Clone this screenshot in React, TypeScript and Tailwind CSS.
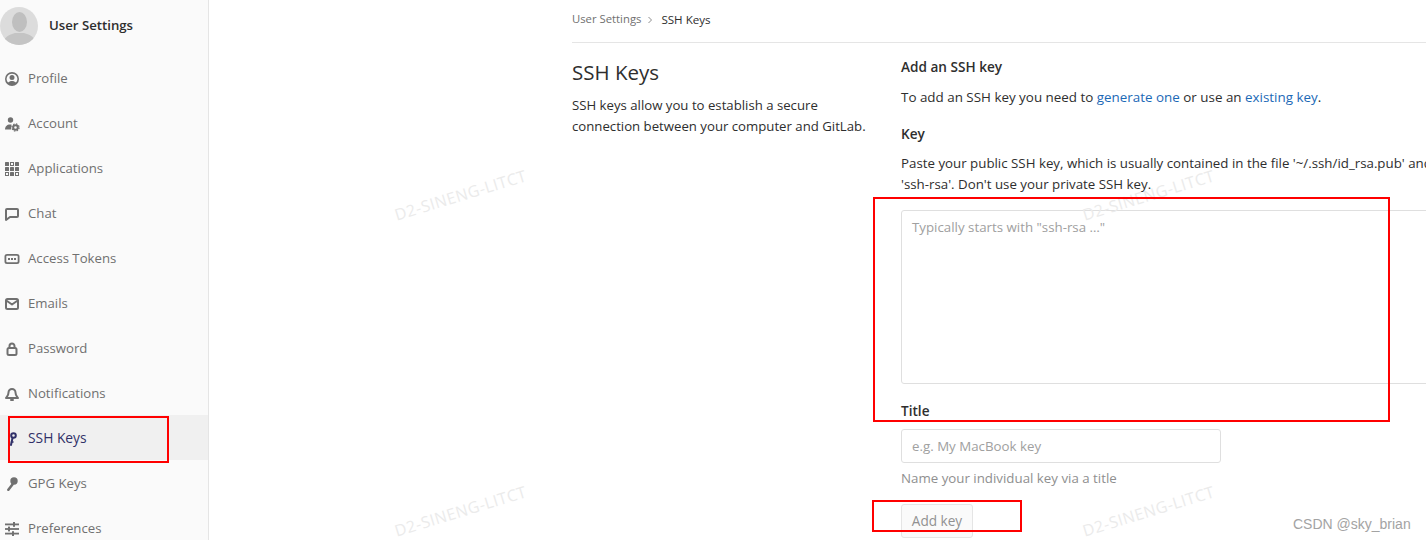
import type { ReactNode } from 'react';

const FONT = "font-['Open_Sans','Noto_Sans',sans-serif]";

function Glyph({ children }: { children: ReactNode }) {
  return (
    <svg viewBox="0 0 16 16" className="h-4 w-4 shrink-0" fill="currentColor">
      {children}
    </svg>
  );
}

function Line({ children }: { children: ReactNode }) {
  return (
    <svg
      viewBox="0 0 16 16"
      className="h-4 w-4 shrink-0"
      fill="none"
      stroke="currentColor"
      strokeWidth="2"
      strokeLinejoin="round"
      strokeLinecap="round"
    >
      {children}
    </svg>
  );
}

const APP_CELLS = [1, 0, 1, 1, 1, 1, 0, 1, 0];

const NAV: { label: string; active?: boolean; icon: ReactNode }[] = [
  {
    label: 'Profile',
    icon: (
      <Glyph>
        <path
          fillRule="evenodd"
          d="M8 1a7 7 0 1 1 0 14A7 7 0 0 1 8 1Zm0 1.700a5.300 5.300 0 0 0-3.900 8.900C5 10.600 6.400 10 8 10s3 .6 3.900 1.600A5.300 5.300 0 0 0 8 2.700ZM8 4a2.500 2.500 0 1 1 0 5 2.500 2.500 0 0 1 0-5Z"
        />
      </Glyph>
    ),
  },
  {
    label: 'Account',
    icon: (
      <Glyph>
        <circle cx="6.500" cy="4" r="2.700" />
        <path d="M1 13.500c0-3 2-5 5-5h1.500L7 13.500Z" />
        <circle cx="11.500" cy="11.500" r="2.300" fill="none" stroke="currentColor" strokeWidth="2" />
        <circle
          cx="11.500"
          cy="11.500"
          r="3.600"
          fill="none"
          stroke="currentColor"
          strokeWidth="1.200"
          strokeDasharray="1.500 1.330"
        />
      </Glyph>
    ),
  },
  {
    label: 'Applications',
    icon: (
      <Glyph>
        {APP_CELLS.map((on, i) => {
          const x = 1 + (i % 3) * 5;
          const y = 1 + Math.floor(i / 3) * 5;
          return on ? (
            <rect key={i} x={x} y={y} width="4" height="4" rx="0.500" />
          ) : (
            <rect key={i} x={x + 0.5} y={y + 0.5} width="3" height="3" fill="none" stroke="currentColor" />
          );
        })}
      </Glyph>
    ),
  },
  {
    label: 'Chat',
    icon: (
      <Line>
        <path d="M3 3h10a1 1 0 0 1 1 1v6a1 1 0 0 1-1 1H6l-4 3V4a1 1 0 0 1 1-1Z" />
      </Line>
    ),
  },
  {
    label: 'Access Tokens',
    icon: (
      <Glyph>
        <path
          fillRule="evenodd"
          d="M3 3h10a2.500 2.500 0 0 1 2.500 2.500v5A2.500 2.500 0 0 1 13 13H3a2.500 2.500 0 0 1-2.500-2.500v-5A2.500 2.500 0 0 1 3 3Zm0 1.800a.7.7 0 0 0-.7.7v5c0 .4.3.7.7.7h10a.7.7 0 0 0 .7-.7v-5a.7.7 0 0 0-.7-.7H3Z"
        />
        <rect x="4" y="7" width="2" height="2" />
        <rect x="7" y="7" width="2" height="2" />
        <rect x="10" y="7" width="2" height="2" />
      </Glyph>
    ),
  },
  {
    label: 'Emails',
    icon: (
      <Line>
        <rect x="2" y="3" width="12" height="10" rx="1.500" />
        <path d="M3 5l5 3.500L13 5" />
      </Line>
    ),
  },
  {
    label: 'Password',
    icon: (
      <Line>
        <rect x="3.500" y="7" width="9" height="7" rx="1.500" />
        <path d="M5.500 7V5a2.500 2.500 0 0 1 5 0v2" />
      </Line>
    ),
  },
  {
    label: 'Notifications',
    icon: (
      <Line>
        <path d="M8 3a3.500 3.500 0 0 1 3.500 3.500c0 3 1.500 4 2.500 5.500H2c1-1.500 2.500-2.500 2.500-5.500A3.500 3.500 0 0 1 8 3Z" />
        <path d="M7 14h2" />
      </Line>
    ),
  },
  {
    label: 'SSH Keys',
    active: true,
    icon: (
      <Line>
        <circle cx="9.500" cy="4.500" r="2.300" />
        <path d="M8.500 7 7 14" />
        <path d="M7.500 11H9" strokeWidth="1.500" />
      </Line>
    ),
  },
  {
    label: 'GPG Keys',
    icon: (
      <Glyph>
        <circle cx="10" cy="5" r="3.700" />
        <path d="M8 7 10 8.500 5 15H3.500L3 13.500Z" />
      </Glyph>
    ),
  },
  {
    label: 'Preferences',
    icon: (
      <Glyph>
        <rect x="1" y="2.500" width="14" height="1.800" />
        <rect x="1" y="7.100" width="14" height="1.800" />
        <rect x="1" y="11.700" width="14" height="1.800" />
        <rect x="9" y="1" width="2" height="4.800" />
        <rect x="4" y="5.600" width="2" height="4.800" />
        <rect x="8" y="10.200" width="2" height="4.800" />
      </Glyph>
    ),
  },
];

function Avatar() {
  return (
    <svg viewBox="0 0 38 38" className="h-[38px] w-[38px] shrink-0 rounded-full">
      <rect width="38" height="38" fill="#dcdcdc" />
      <ellipse cx="19.500" cy="15" rx="7.500" ry="10" fill="#bfbfbf" />
      <path d="M3 38c0-8 6-10 12-12h9c6 2 12 4 12 12Z" fill="#c4c4c4" />
    </svg>
  );
}

function Sidebar() {
  return (
    <aside className="h-[540px] w-[209px] shrink-0 border-r border-[#e5e5e5] bg-[#fafafa]">
      <div className="flex h-[55px] items-center gap-[11px] pb-[3px]">
        <Avatar />
        <span className="text-[13.2px] font-semibold text-[#2e2e2e]">User Settings</span>
      </div>
      <nav className="flex flex-col">
        {NAV.map((item) => (
          <div
            key={item.label}
            className={`flex h-[45px] items-center gap-[8px] pl-1 pt-[2px] ${
              item.active ? 'bg-[#f0f0f0] text-[13.8px] font-medium text-[#303068]' : 'text-[13.2px] text-[#707070]'
            }`}
          >
            {item.icon}
            <span>{item.label}</span>
          </div>
        ))}
      </nav>
    </aside>
  );
}

function AddKeyForm() {
  return (
    <div className="w-[760px] shrink-0 text-[13.3px] text-[#2e2e2e]">
      <h4 className="text-[13.6px] font-semibold leading-5">Add an SSH key</h4>
      <p className="mt-[10px] text-[13.4px] leading-5">
        To add an SSH key you need to <span className="text-[#1b69b6]">generate one</span> or use an{' '}
        <span className="text-[#1b69b6]">existing key</span>.
      </p>
      <label className="mt-[17px] block text-[13.6px] font-semibold leading-5">Key</label>
      <p className="mt-[9px] leading-[21px]">
        Paste your public SSH key, which is usually contained in the file '~/.ssh/id_rsa.pub' and begins with
        <br />
        'ssh-rsa'. Don't use your private SSH key.
      </p>
      <div className="mt-[15px] h-[174px] rounded-[3px] border border-[#dfdfdf] bg-white px-[10px] py-[6px] leading-5 text-[#a0a0a0]">
        Typically starts with "ssh-rsa …"
      </div>
      <label className="mt-[17px] block text-[13.6px] font-semibold leading-5">Title</label>
      <div className="mt-2 flex h-[34px] w-[320px] items-center rounded-[3px] border border-[#dfdfdf] bg-white px-[10px] pt-[2px] text-[#a0a0a0]">
        e.g. My MacBook key
      </div>
      <p className="mt-[5px] leading-5 text-[#8f8f8f]">Name your individual key via a title</p>
      <button className="mt-[16px] h-[34px] w-[72px] rounded-[3px] border border-[#e5e5e5] bg-[#fafafa] text-[13.6px] text-[#919191]">
        Add key
      </button>
    </div>
  );
}

function Main() {
  return (
    <main className="min-w-0 flex-1 pl-[363px]">
      <div className="flex h-[43px] w-[1000px] items-center border-b border-[#e5e5e5] pb-[3px] text-[11.3px]">
        <span className="text-[#707070]">User Settings</span>
        <svg viewBox="0 0 8 8" className="ml-[5px] h-2 w-2 text-[#8f8f8f]" fill="none" stroke="currentColor">
          <path d="M2.500 1 5.500 4 2.500 7" />
        </svg>
        <span className="ml-[7px] text-[11.6px] font-medium text-[#2e2e2e]">SSH Keys</span>
      </div>
      <div className="flex pt-[14px]">
        <div className="w-[329px] shrink-0">
          <h4 className="text-[20.5px] font-medium leading-[30px] text-[#2e2e2e]">SSH Keys</h4>
          <p className="mt-[8px] w-[300px] text-[13.2px] leading-[21px] text-[#2e2e2e]">
            SSH keys allow you to establish a secure connection between your computer and GitLab.
          </p>
        </div>
        <AddKeyForm />
      </div>
    </main>
  );
}

function Watermark({ className }: { className: string }) {
  return (
    <span
      className={`pointer-events-none absolute -rotate-[17deg] whitespace-nowrap text-[16px] tracking-[0.5px] text-[#ebebeb] ${className}`}
    >
      D2-SINENG-LITCT
    </span>
  );
}

export default function App() {
  return (
    <div className={`relative flex h-[540px] w-[1426px] overflow-hidden bg-white ${FONT}`}>
      <Sidebar />
      <Main />

      <Watermark className="left-[392px] top-[183px]" />
      <Watermark className="left-[1080px] top-[183px]" />
      <Watermark className="left-[392px] top-[499px]" />
      <Watermark className="left-[1080px] top-[499px]" />

      {/* red annotation boxes pasted over the screenshot */}
      <div className="absolute left-[8px] top-[416px] h-[47px] w-[161px] border-2 border-[#ff0000]" />
      <div className="absolute left-[873px] top-[197px] h-[225px] w-[517px] border-2 border-[#ff0000]" />
      <div className="absolute left-[872px] top-[500px] h-[32px] w-[150px] border-2 border-[#ff0000]" />

      <span className="absolute left-[1293px] top-[514px] font-['Liberation_Sans',sans-serif] text-sm text-[#a3a3a3]">
        CSDN @sky_brian
      </span>
    </div>
  );
}
